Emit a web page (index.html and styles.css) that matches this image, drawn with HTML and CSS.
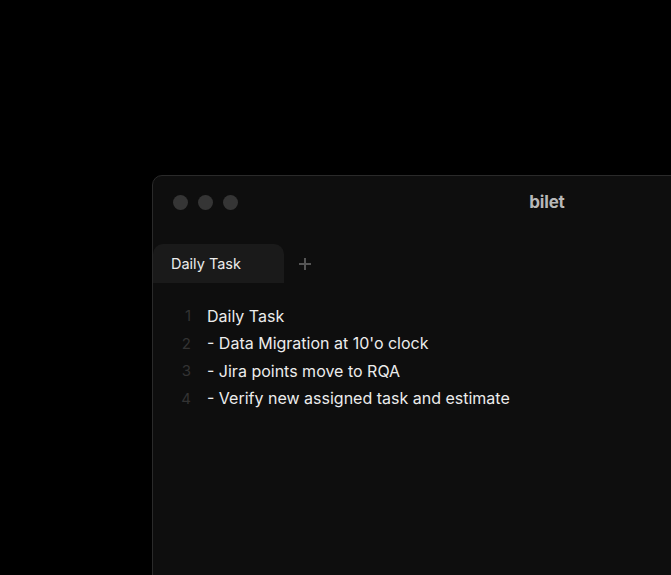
FILE: index.html
```html
<!DOCTYPE html>
<html>
<head>
    <title>bilet</title>
    <link rel="stylesheet" href="styles.css">
</head>
<body>
    <div class="window">
        <div class="titlebar">
            <div class="dots">
                <span class="dot"></span>
                <span class="dot"></span>
                <span class="dot"></span>
            </div>
            <div class="title">bilet</div>
            <div></div>
        </div>
        <div class="tabs">
            <div class="tab">Daily Task</div>
            <div class="add">
                <svg width="12" height="12" viewBox="0 0 12 12">
                    <path d="M6 0v12M0 6h12" stroke="#555" stroke-width="2"/>
                </svg>
            </div>
        </div>
        <div class="editor">
            <div class="line"><span class="num">1</span><span class="text">Daily Task</span></div>
            <div class="line"><span class="num">2</span><span class="text">- Data Migration at 10'o clock</span></div>
            <div class="line"><span class="num">3</span><span class="text">- Jira points move to RQA</span></div>
            <div class="line"><span class="num">4</span><span class="text">- Verify new assigned task and estimate</span></div>
        </div>
    </div>
</body>
</html>
```

FILE: styles.css
```css
html, body {
    margin: 0;
    background: #000;
    height: 100%;
    overflow: hidden;
}
body {
    font-family: Inter, "Liberation Sans", sans-serif;
}
.window {
    margin: 175px 0 0 152px;
    width: 788px;
    height: 440px;
    border: 1px solid #2a2a2a;
    border-radius: 10px;
    background: #0e0e0e;
}
.titlebar {
    display: grid;
    grid-template-columns: 1fr auto 1fr;
    align-items: center;
    height: 68px;
    padding: 19px 20px 0;
    box-sizing: border-box;
    align-content: start;
}
.dots {
    display: flex;
    gap: 10px;
}
.dot {
    width: 15px;
    height: 15px;
    border-radius: 50%;
    background: #353535;
}
.title {
    font-size: 17px;
    line-height: 15px;
    font-weight: 700;
    color: #b8b8b8;
    letter-spacing: -0.2px;
}
.tabs {
    display: flex;
    align-items: center;
    height: 39px;
}
.tab {
    width: 131px;
    height: 39px;
    box-sizing: border-box;
    padding: 11px 0 0 18px;
    background: #1a1a1a;
    border-radius: 10px 10px 0 0;
    color: #ececec;
    font-size: 14.5px;
}
.add {
    display: flex;
    margin-left: 15px;
}
.editor {
    padding: 19px 0 0 20px;
}
.line {
    display: flex;
    height: 27.5px;
    align-items: center;
    font-size: 16px;
}
.num {
    width: 18px;
    text-align: right;
    font-size: 15px;
    color: #333;
    margin-right: 16px;
}
.text {
    color: #ececec;
}
```
